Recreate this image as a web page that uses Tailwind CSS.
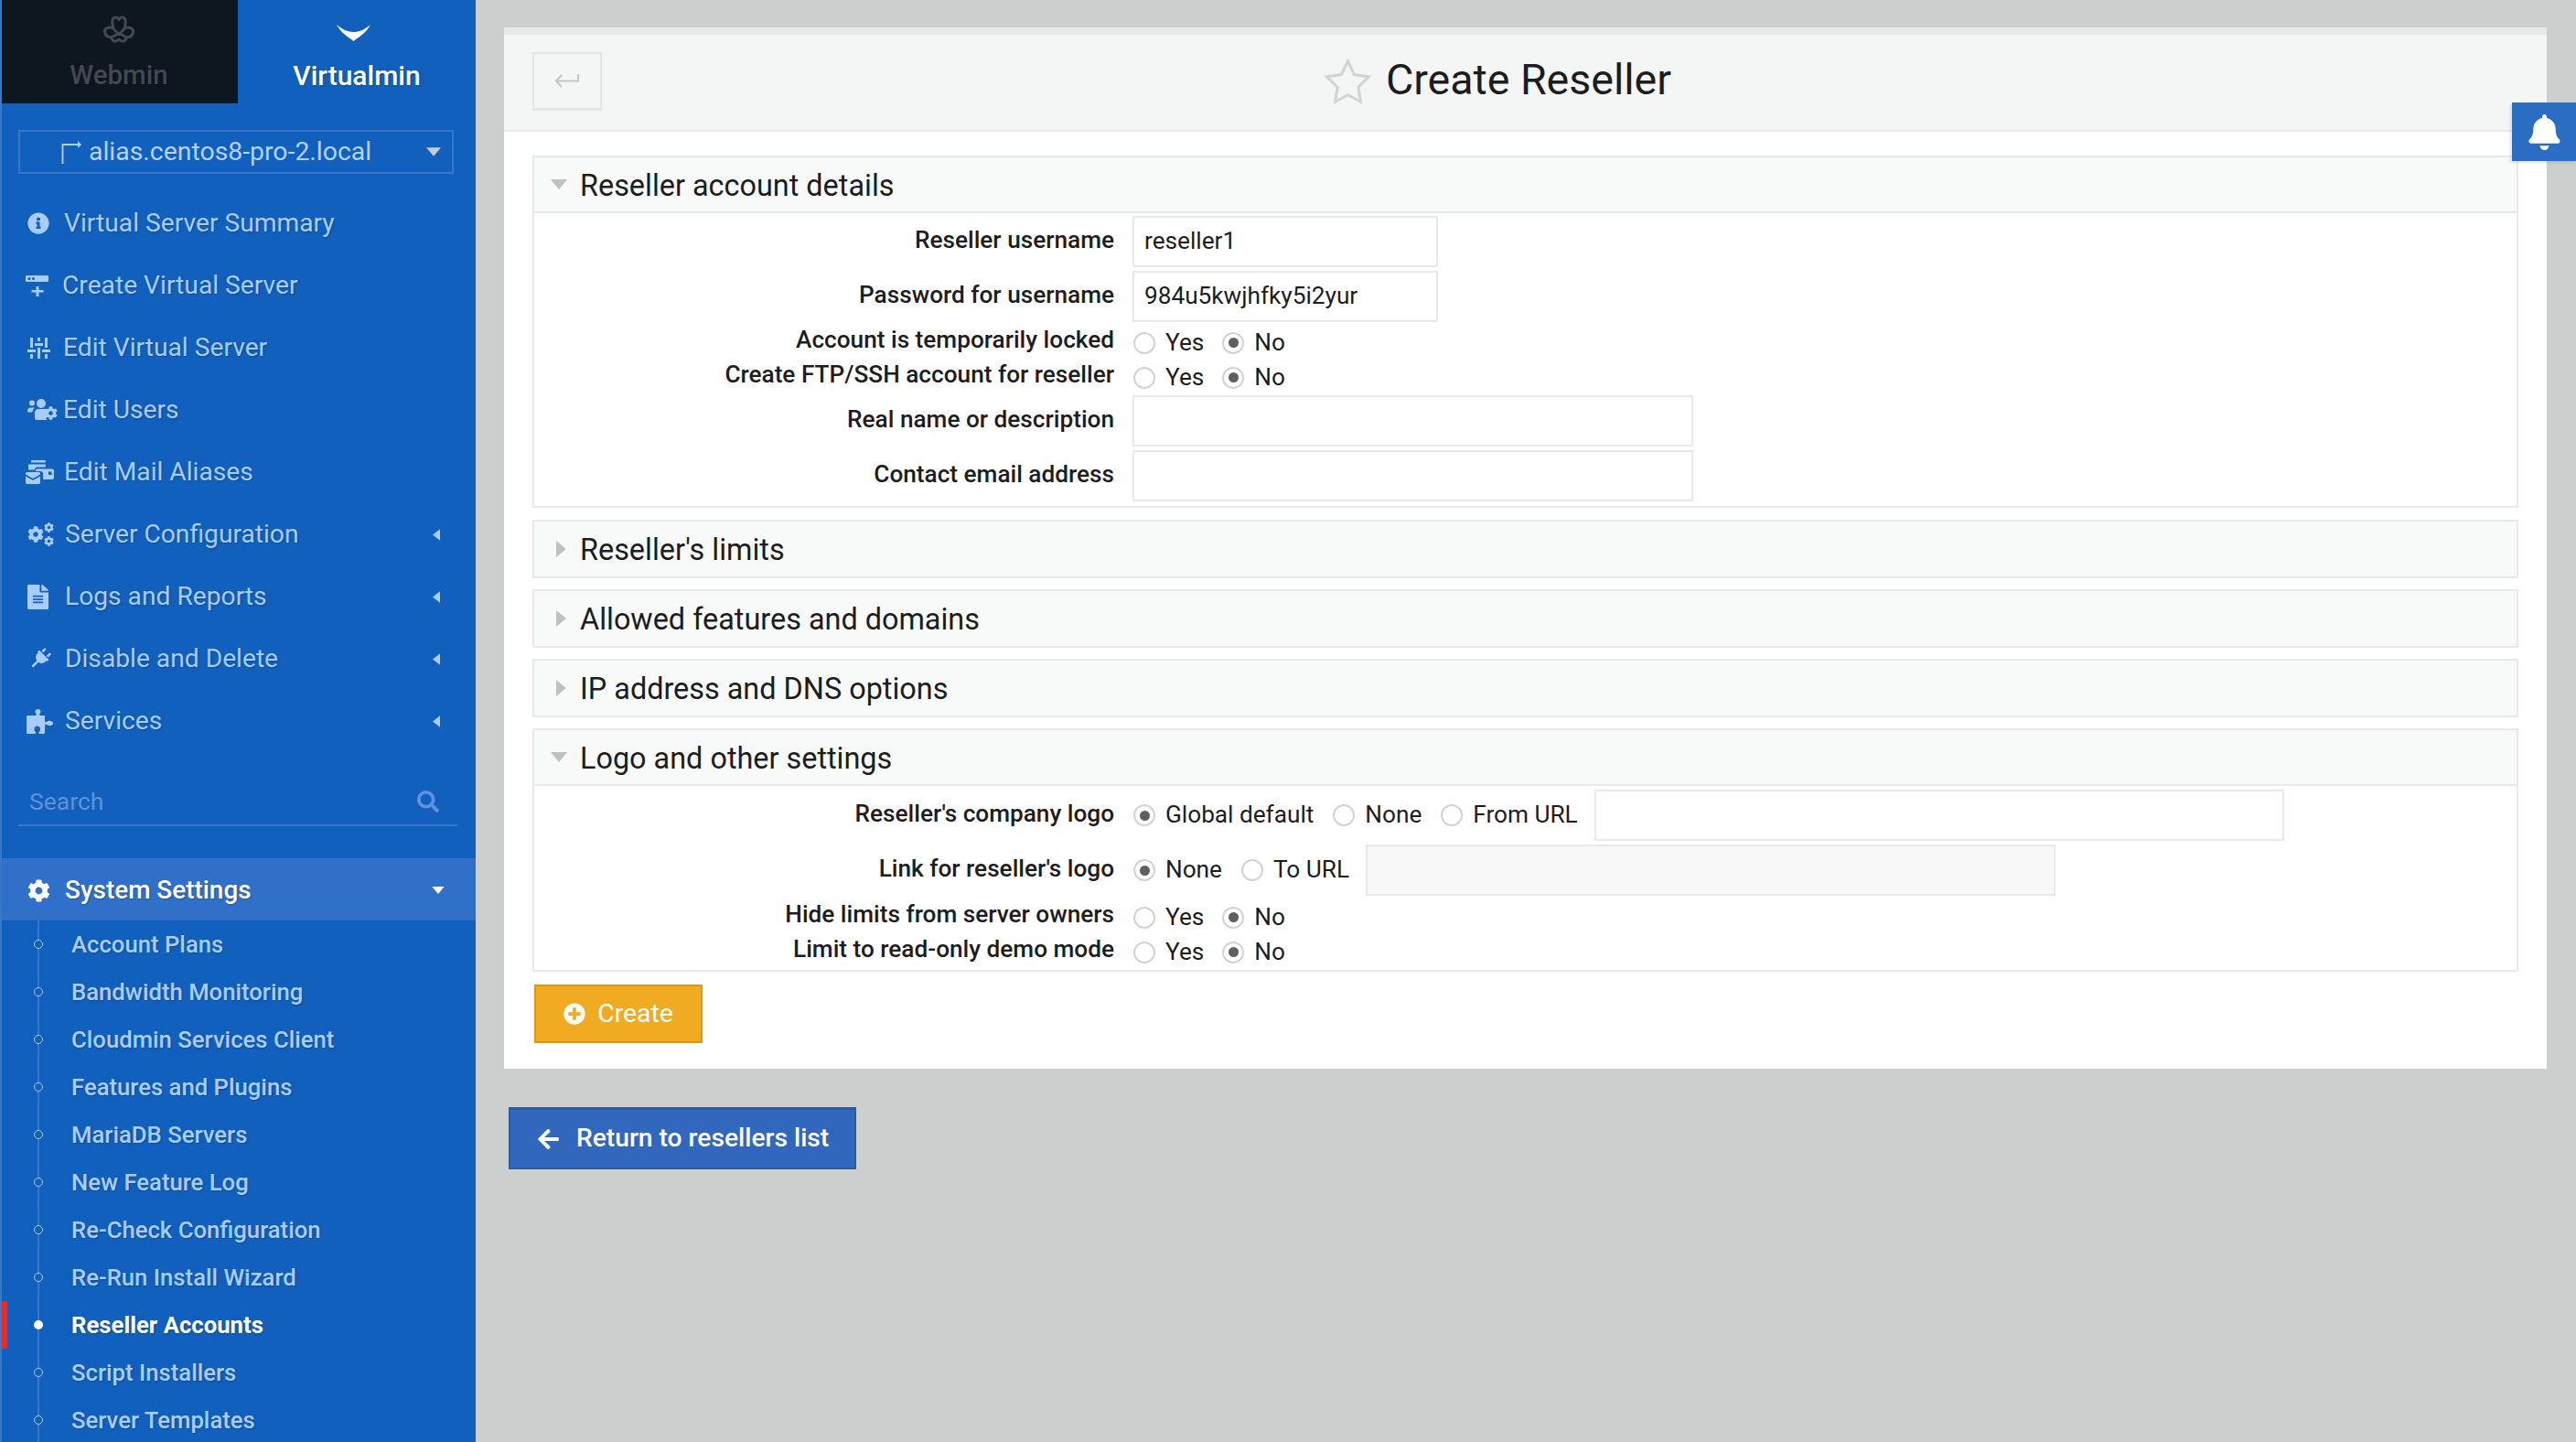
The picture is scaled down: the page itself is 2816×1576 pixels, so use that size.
<!DOCTYPE html>
<html lang="en">
<head>
    <meta charset="UTF-8">
    <title>Create Reseller</title>
    <script src="https://cdn.jsdelivr.net/npm/@tailwindcss/browser@4"></script>
</head>
<body class="bg-[#cdcfce] font-['Roboto',sans-serif] overflow-hidden">
    <svg class="hidden">
        <symbol id="cog" viewBox="0 0 512 512"><path d="M487.4 315.7l-42.6-24.6c4.3-23.2 4.3-47 0-70.2l42.6-24.6c4.9-2.8 7.1-8.6 5.5-14-11.1-35.6-30-67.8-54.7-94.6-3.8-4.1-10-5.1-14.8-2.3L380.8 110c-17.9-15.4-38.5-27.3-60.8-35.1V25.8c0-5.6-3.9-10.5-9.4-11.7-36.7-8.2-74.3-7.8-109.2 0-5.5 1.2-9.4 6.1-9.4 11.7V75c-22.2 7.9-42.8 19.8-60.8 35.1L88.7 85.5c-4.9-2.8-11-1.9-14.8 2.3-24.7 26.7-43.6 58.9-54.7 94.6-1.7 5.4.6 11.2 5.5 14L67.3 221c-4.3 23.2-4.3 47 0 70.2l-42.6 24.6c-4.9 2.8-7.1 8.6-5.5 14 11.1 35.6 30 67.8 54.7 94.6 3.8 4.1 10 5.1 14.8 2.3l42.6-24.6c17.9 15.4 38.5 27.3 60.8 35.1v49.2c0 5.6 3.9 10.5 9.4 11.7 36.7 8.2 74.3 7.8 109.2 0 5.5-1.2 9.4-6.1 9.4-11.7v-49.2c22.2-7.9 42.8-19.8 60.8-35.1l42.6 24.6c4.9 2.8 11 1.9 14.8-2.3 24.7-26.7 43.6-58.9 54.7-94.6 1.5-5.5-.7-11.3-5.6-14.1zM256 336c-44.1 0-80-35.9-80-80s35.9-80 80-80 80 35.9 80 80-35.9 80-80 80z"/></symbol>
        <symbol id="caret-left" viewBox="0 0 9 14"><path d="M9 0v14L0 7z"/></symbol>
        <symbol id="tri-down" viewBox="0 0 20 12"><path d="M0 0h20L10 12z"/></symbol>
        <symbol id="tri-right" viewBox="0 0 11 18"><path d="M0 0l11 9-11 9z"/></symbol>
    </svg>

    <div class="flex h-[1576px] w-[2816px] relative">
        <!-- Sidebar -->
        <aside class="w-[520px] h-full bg-[#1160bd] border-l-2 border-[#3a77c9] flex flex-col overflow-hidden shrink-0 [text-shadow:1px_1px_2px_rgba(0,0,0,0.22)]">
            <div class="flex h-[113px] shrink-0 -ml-[2px]">
                <div class="w-[260px] bg-[#0e1620] flex flex-col items-center pt-[17px] text-[#434852]">
                    <svg class="w-[34px] h-[32px]" viewBox="0 0 34 32" fill="none" stroke="#434852" stroke-width="3" stroke-linejoin="round">
                        <path d="M11 14C9 7 9 2 13.500 2C15.500 2 16.500 3 17 4.500C17.500 3 18.500 2 20.500 2C25 2 25 7 23 14C27 12 33 13 32.500 18C32 23 27 24 25 23.500C25 27 22 30.500 17 26C12 30.500 9 27 9 23.500C7 24 2 23 1.500 18C1 13 7 12 11 14Z"/>
                        <path d="M11 14C13 17 15 19 17 19.500C19 19 21 17 23 14M9 23.500C11 22.500 14 21 17 19.500C20 21 23 22.500 25 23.500"/>
                    </svg>
                    <span class="text-[29.500px] font-medium leading-none mt-[19px]">Webmin</span>
                </div>
                <div class="w-[260px] flex flex-col items-center pt-[27px] text-white">
                    <svg class="w-[37px] h-[18px] -ml-[8px]" viewBox="0 0 37 18" fill="#fff"><path d="M0 0C6 5 12 8 18.500 8C25 8 31 5 37 0C33 8 25 13 18.500 18C12 13 4 8 0 0Z"/></svg>
                    <span class="text-[30px] font-medium leading-none mt-[23px]">Virtualmin</span>
                </div>
            </div>

            <div class="mt-[29px] ml-[18px] w-[476px] h-[48px] shrink-0 border-2 border-[#3a77c9] flex items-center text-[#b5d2ff] text-[28.400px] pl-[45px] pr-[12px] [text-shadow:none]">
                <svg class="w-[23px] h-[26px] mr-[7px] shrink-0" viewBox="0 0 23 26" fill="none" stroke="#b5d2ff" stroke-width="1.800"><path d="M1.500 26V5H20"/><path d="M18 1l4 4-4 4" fill="#b5d2ff" stroke="none"/></svg>
                <span class="flex-1 whitespace-nowrap">alias.centos8-pro-2.local</span>
                <svg class="w-[16px] h-[10px]" fill="#c8ccd0"><use href="#tri-down"/></svg>
            </div>

            <nav class="mt-[20px] text-[28.200px] text-[#a9ccff] shrink-0">
                <a class="flex items-center h-[68px] pl-[28px]">
                    <span class="w-[40px] shrink-0"><svg class="w-[24px] h-[24px]" viewBox="0 0 512 512" fill="#a9ccff"><path d="M256 8C119.043 8 8 119.083 8 256c0 136.997 111.043 248 248 248s248-111.003 248-248C504 119.083 392.957 8 256 8zm0 110c23.196 0 42 18.804 42 42s-18.804 42-42 42-42-18.804-42-42 18.804-42 42-42zm56 254c0 6.627-5.373 12-12 12h-88c-6.627 0-12-5.373-12-12v-24c0-6.627 5.373-12 12-12h12v-64h-12c-6.627 0-12-5.373-12-12v-24c0-6.627 5.373-12 12-12h64c6.627 0 12 5.373 12 12v100h12c6.627 0 12 5.373 12 12v24z"/></svg></span>
                    <span>Virtual Server Summary</span>
                </a>
                <a class="flex items-center h-[68px] pl-[26px]">
                    <span class="w-[40px] shrink-0"><svg class="w-[26px] h-[24px]" viewBox="0 0 26 24" fill="#a9ccff"><path d="M1 1h23a1 1 0 0 1 1 1v5a1 1 0 0 1-1 1H1a1 1 0 0 1-1-1V2a1 1 0 0 1 1-1z"/><path d="M11.500 13h3v4h5v2.500h-5V24h-3v-4.500h-5V17h5z"/><circle cx="4" cy="4.500" r="1.500" fill="#1160bd"/><circle cx="8.500" cy="4.500" r="1.500" fill="#1160bd"/></svg></span>
                    <span>Create Virtual Server</span>
                </a>
                <a class="flex items-center h-[68px] pl-[28px]">
                    <span class="w-[39px] shrink-0"><svg class="w-[25px] h-[23px]" viewBox="0 0 25 23" fill="#a9ccff"><rect x="3" y="0" width="3" height="11"/><rect x="0" y="13" width="9" height="3"/><rect x="3" y="18" width="3" height="5"/><rect x="11" y="0" width="3" height="4"/><rect x="8" y="6" width="9" height="3"/><rect x="11" y="11" width="3" height="12"/><rect x="19" y="0" width="3" height="11"/><rect x="16" y="13" width="9" height="3"/><rect x="19" y="18" width="3" height="5"/></svg></span>
                    <span>Edit Virtual Server</span>
                </a>
                <a class="flex items-center h-[68px] pl-[28px]">
                    <span class="w-[39px] shrink-0"><svg class="w-[33px] h-[24px]" viewBox="0 0 33 24" fill="#a9ccff"><circle cx="5" cy="4.500" r="3"/><circle cx="15" cy="5" r="5"/><path d="M0 13c0-2 1.500-3.500 4-3.500h4c-1.500 1.500-2.500 3-2.500 5H1a1 1 0 0 1-1-1.500z"/><path d="M8 15c0-2.500 2-4 4-4h6c2 0 3 .5 3.500 2-1.500 2-1.500 7-.5 9.500V23H10a2 2 0 0 1-2-2z"/><use href="#cog" x="18" y="8" width="15" height="15"/></svg></span>
                    <span>Edit Users</span>
                </a>
                <a class="flex items-center h-[68px] pl-[26px]">
                    <span class="w-[42px] shrink-0"><svg class="w-[31px] h-[26px]" viewBox="0 0 31 26" fill="#a9ccff"><rect x="6" y="0" width="16" height="2.500" rx="1"/><path d="M3 4.500h19v3h-9a3 3 0 0 0-3 3h-7z"/><path d="M12 9.500h17a2 2 0 0 1 2 2V19a2 2 0 0 1-2 2H19v-6a3 3 0 0 0-3-3h-5a2 2 0 0 1 1-2.500z"/><rect x="25" y="12.500" width="3.500" height="3.500" fill="#1160bd"/><path d="M0 14.500a1.500 1.500 0 0 1 1.500-1.500h13a1.500 1.500 0 0 1 1.500 1.500v1L8 20 0 15.500z"/><path d="M0 17.500l8 4.500 8-4.500v7a1.500 1.500 0 0 1-1.500 1.500h-13A1.500 1.500 0 0 1 0 24.500z"/></svg></span>
                    <span>Edit Mail Aliases</span>
                </a>
                <a class="flex items-center h-[68px] pl-[28px] pr-[39px]">
                    <span class="w-[41px] shrink-0"><svg class="w-[30px] h-[27px]" viewBox="0 0 30 27" fill="#a9ccff"><use href="#cog" x="0" y="4" width="18" height="18"/><use href="#cog" x="18" y="0" width="11" height="11"/><use href="#cog" x="18" y="15" width="11" height="11"/></svg></span>
                    <span class="flex-1">Server Configuration</span>
                    <svg class="w-[8px] h-[13px]" fill="#a9ccff"><use href="#caret-left"/></svg>
                </a>
                <a class="flex items-center h-[68px] pl-[28px] pr-[39px]">
                    <span class="w-[41px] shrink-0"><svg class="w-[23px] h-[27px]" viewBox="0 0 384 512" preserveAspectRatio="none" fill="#a9ccff"><path d="M224 136V0H24C10.7 0 0 10.7 0 24v464c0 13.300 10.700 24 24 24h336c13.300 0 24-10.700 24-24V160H248c-13.200 0-24-10.800-24-24zm64 236c0 6.600-5.400 12-12 12H108c-6.600 0-12-5.400-12-12v-8c0-6.600 5.400-12 12-12h168c6.600 0 12 5.400 12 12v8zm0-64c0 6.600-5.400 12-12 12H108c-6.600 0-12-5.400-12-12v-8c0-6.600 5.400-12 12-12h168c6.600 0 12 5.400 12 12v8zm0-72v8c0 6.600-5.400 12-12 12H108c-6.600 0-12-5.400-12-12v-8c0-6.600 5.400-12 12-12h168c6.600 0 12 5.400 12 12zm96-114.100v6.100H256V0h6.100c6.400 0 12.500 2.500 17 7l97.900 98c4.500 4.500 7 10.600 7 16.900z"/></svg></span>
                    <span class="flex-1">Logs and Reports</span>
                    <svg class="w-[8px] h-[13px]" fill="#a9ccff"><use href="#caret-left"/></svg>
                </a>
                <a class="flex items-center h-[68px] pl-[28px] pr-[39px]">
                    <span class="w-[41px] shrink-0"><svg class="w-[28px] h-[28px]" viewBox="0 0 640 640" fill="#a9ccff"><path transform="rotate(45 320 320) translate(147 41) scale(0.9)" d="M320 32a32 32 0 0 0-64 0v96h64zm48 128H16a16 16 0 0 0-16 16v32a16 16 0 0 0 16 16h16v32a160.070 160.070 0 0 0 128 156.800V620h64V412.800A160.070 160.070 0 0 0 352 256v-32h16a16 16 0 0 0 16-16v-32a16 16 0 0 0-16-16zM128 32a32 32 0 0 0-64 0v96h64z"/></svg></span>
                    <span class="flex-1">Disable and Delete</span>
                    <svg class="w-[8px] h-[13px]" fill="#a9ccff"><use href="#caret-left"/></svg>
                </a>
                <a class="flex items-center h-[68px] pl-[27px] pr-[39px]">
                    <span class="w-[42px] shrink-0"><svg class="w-[29px] h-[27px]" viewBox="0 0 29 27" fill="#a9ccff"><path d="M1 7h8.500C11 7 11 5.500 10.500 5 9.500 4 9.500 3 9.500 2.500 9.500 1 11 0 12.500 0S15.500 1 15.500 2.500c0 .5 0 1.500-1 2.500-.5.500-.5 2 1 2H20v6c0 1.500 1.500 1.500 2 1 .8-.8 2-1.200 3-1.200 2 0 4 1 4 2.700s-2 2.700-4 2.700c-1 0-2.200-.4-3-1.200-.5-.5-2-.5-2 1V26a1 1 0 0 1-1 1h-4.500c-1.500 0-1.500-1.500-.5-2.500.8-.8 1-1.500 1-2.500 0-2-1.500-3.500-3.500-3.500S8.500 20 8.500 22c0 1 .2 1.700 1 2.500 1 1 1 2.500-.5 2.500H1a1 1 0 0 1-1-1V8a1 1 0 0 1 1-1z"/></svg></span>
                    <span class="flex-1">Services</span>
                    <svg class="w-[8px] h-[13px]" fill="#a9ccff"><use href="#caret-left"/></svg>
                </a>
            </nav>

            <div class="mx-[18px] w-[480px] h-[81px] shrink-0 border-b-2 border-[#3a77c9] flex items-center justify-between pl-[12px] pr-[20px] pt-[28px] text-[#5f92dc] text-[26.500px] [text-shadow:none]">
                <span>Search</span>
                <svg class="w-[24px] h-[24px]" viewBox="0 0 512 512" fill="#5f92dc"><path d="M505 442.700L405.300 343c-4.500-4.500-10.600-7-17-7H372c27.600-35.300 44-79.700 44-128C416 93.100 322.900 0 208 0S0 93.100 0 208s93.100 208 208 208c48.300 0 92.700-16.400 128-44v16.300c0 6.400 2.500 12.500 7 17l99.700 99.700c9.400 9.400 24.600 9.400 33.900 0l28.300-28.300c9.400-9.400 9.400-24.600.1-34zM208 336c-70.700 0-128-57.200-128-128 0-70.700 57.200-128 128-128 70.700 0 128 57.200 128 128 0 70.700-57.200 128-128 128z"/></svg>
            </div>

            <a class="mt-[35px] h-[68px] shrink-0 bg-[#3070c8] flex items-center pl-[28px] pr-[34px] pt-[2px] text-white text-[27.900px] font-medium">
                <svg class="w-[25px] h-[25px] mr-[16px]" fill="#fff"><use href="#cog"/></svg>
                <span class="flex-1">System Settings</span>
                <svg class="w-[14px] h-[8px]" fill="#fff"><use href="#tri-down"/></svg>
            </a>

            <ul class="ml-[39px] flex-1 border-l-2 border-[#3c78c8] text-[25.700px] text-[#a9ccff] font-medium">
                <li class="flex items-center h-[52px]"><span class="w-[10px] h-[10px] -ml-[6px] mr-[31px] rounded-full border-[1.500px] border-[#a9ccff] bg-[#1160bd]"></span>Account Plans</li>
                <li class="flex items-center h-[52px]"><span class="w-[10px] h-[10px] -ml-[6px] mr-[31px] rounded-full border-[1.500px] border-[#a9ccff] bg-[#1160bd]"></span>Bandwidth Monitoring</li>
                <li class="flex items-center h-[52px]"><span class="w-[10px] h-[10px] -ml-[6px] mr-[31px] rounded-full border-[1.500px] border-[#a9ccff] bg-[#1160bd]"></span>Cloudmin Services Client</li>
                <li class="flex items-center h-[52px]"><span class="w-[10px] h-[10px] -ml-[6px] mr-[31px] rounded-full border-[1.500px] border-[#a9ccff] bg-[#1160bd]"></span>Features and Plugins</li>
                <li class="flex items-center h-[52px]"><span class="w-[10px] h-[10px] -ml-[6px] mr-[31px] rounded-full border-[1.500px] border-[#a9ccff] bg-[#1160bd]"></span>MariaDB Servers</li>
                <li class="flex items-center h-[52px]"><span class="w-[10px] h-[10px] -ml-[6px] mr-[31px] rounded-full border-[1.500px] border-[#a9ccff] bg-[#1160bd]"></span>New Feature Log</li>
                <li class="flex items-center h-[52px]"><span class="w-[10px] h-[10px] -ml-[6px] mr-[31px] rounded-full border-[1.500px] border-[#a9ccff] bg-[#1160bd]"></span>Re-Check Configuration</li>
                <li class="flex items-center h-[52px]"><span class="w-[10px] h-[10px] -ml-[6px] mr-[31px] rounded-full border-[1.500px] border-[#a9ccff] bg-[#1160bd]"></span>Re-Run Install Wizard</li>
                <li class="relative flex items-center h-[52px] text-white font-bold">
                    <span class="absolute -left-[43px] top-0 w-[8px] h-[52px] bg-[#f5261c]"></span>
                    <span class="w-[10px] h-[10px] -ml-[6px] mr-[31px] rounded-full bg-white"></span>Reseller Accounts
                </li>
                <li class="flex items-center h-[52px]"><span class="w-[10px] h-[10px] -ml-[6px] mr-[31px] rounded-full border-[1.500px] border-[#a9ccff] bg-[#1160bd]"></span>Script Installers</li>
                <li class="flex items-center h-[52px]"><span class="w-[10px] h-[10px] -ml-[6px] mr-[31px] rounded-full border-[1.500px] border-[#a9ccff] bg-[#1160bd]"></span>Server Templates</li>
            </ul>
        </aside>

        <!-- Main -->
        <main class="flex-1 pl-[31px] pr-[32px] pt-[30px] text-[#1d1d1d]">
            <div class="bg-white border-t-[8px] border-[#e8e9e9] h-[1138px]">
                <header class="h-[106px] bg-[#f4f6f5] border-b-2 border-[#e8e9e9] flex items-center pl-[31px]">
                    <button class="w-[76px] h-[64px] mt-[-2px] border-2 border-[#e4e5e5] border-b-[3px] flex items-center justify-center">
                        <svg class="w-[28px] h-[18px]" viewBox="0 0 28 18" fill="none" stroke="#c4c6c6" stroke-width="2"><path d="M26 1v7.500H2"/><path d="M8 2L2 8.500 8 15"/></svg>
                    </button>
                    <div class="flex-1 flex items-center justify-center pr-[168px] pb-[5px]">
                        <svg class="w-[53px] h-[50px] mr-[15px]" viewBox="0 0 53 50" fill="none" stroke="#d2d3d3" stroke-width="3"><path d="M26.500 4l6.900 14.600 15.800 2.300-11.400 11.300 2.700 16-14-7.600-14 7.600 2.700-16L3.300 20.900l15.800-2.300z"/></svg>
                        <h1 class="text-[46.500px] leading-none">Create Reseller</h1>
                    </div>
                </header>

                <div class="pl-[31px] pr-[31px] pt-[26px]">
                    <!-- Reseller account details -->
                    <section class="border-2 border-[#e8e9e9] w-[2171px]">
                        <div class="h-[61px] bg-[#f8f9f9] border-b-2 border-[#e8e9e9] flex items-center pl-[17px] text-[32.400px]">
                            <svg class="w-[20px] h-[11px] mr-[13px]" fill="#c0c2c2"><use href="#tri-down"/></svg>
                            <span class="pt-[3px]">Reseller account details</span>
                        </div>
                        <div class="pt-[1px] pb-[3px] text-[26.200px]">
                            <div class="flex items-center h-[60px]">
                                <label class="w-[634px] text-right font-medium mb-[3px]">Reseller username</label>
                                <span class="ml-[20px] w-[334px] h-[56px] border-2 border-[#e8e9e9] flex items-center pl-[11px]">reseller1</span>
                            </div>
                            <div class="flex items-center h-[60px]">
                                <label class="w-[634px] text-right font-medium mb-[3px]">Password for username</label>
                                <span class="ml-[20px] w-[334px] h-[56px] border-2 border-[#e8e9e9] flex items-center pl-[11px]">984u5kwjhfky5i2yur</span>
                            </div>
                            <div class="flex items-center h-[38px]">
                                <label class="w-[634px] text-right font-medium mb-[2px]">Account is temporarily locked</label>
                                <div class="ml-[21px] mt-[3px] flex items-center">
                                    <span class="w-[24px] h-[24px] rounded-full border-2 border-[#d2d3d3]"></span><span class="ml-[11px] mr-[20px]">Yes</span>
                                    <span class="w-[24px] h-[24px] rounded-full border-2 border-[#d2d3d3] flex items-center justify-center"><span class="w-[11px] h-[11px] rounded-full bg-[#5f5f5f]"></span></span><span class="ml-[11px]">No</span>
                                </div>
                            </div>
                            <div class="flex items-center h-[38px]">
                                <label class="w-[634px] text-right font-medium mb-[2px]">Create FTP/SSH account for reseller</label>
                                <div class="ml-[21px] mt-[3px] flex items-center">
                                    <span class="w-[24px] h-[24px] rounded-full border-2 border-[#d2d3d3]"></span><span class="ml-[11px] mr-[20px]">Yes</span>
                                    <span class="w-[24px] h-[24px] rounded-full border-2 border-[#d2d3d3] flex items-center justify-center"><span class="w-[11px] h-[11px] rounded-full bg-[#5f5f5f]"></span></span><span class="ml-[11px]">No</span>
                                </div>
                            </div>
                            <div class="flex items-center h-[60px]">
                                <label class="w-[634px] text-right font-medium mb-[3px]">Real name or description</label>
                                <span class="ml-[20px] w-[613px] h-[56px] border-2 border-[#e8e9e9]"></span>
                            </div>
                            <div class="flex items-center h-[60px]">
                                <label class="w-[634px] text-right font-medium mb-[3px]">Contact email address</label>
                                <span class="ml-[20px] w-[613px] h-[56px] border-2 border-[#e8e9e9]"></span>
                            </div>
                        </div>
                    </section>

                    <!-- Collapsed sections -->
                    <section class="mt-[13px] w-[2171px] h-[64px] border-2 border-[#e8e9e9] bg-[#f8f9f9] flex items-center pl-[24px] text-[32.400px]">
                        <svg class="w-[11px] h-[18px] mr-[15px]" fill="#c0c2c2"><use href="#tri-right"/></svg>
                        <span class="pt-[3px]">Reseller's limits</span>
                    </section>
                    <section class="mt-[12px] w-[2171px] h-[64px] border-2 border-[#e8e9e9] bg-[#f8f9f9] flex items-center pl-[24px] text-[32.400px]">
                        <svg class="w-[11px] h-[18px] mr-[15px]" fill="#c0c2c2"><use href="#tri-right"/></svg>
                        <span class="pt-[3px]">Allowed features and domains</span>
                    </section>
                    <section class="mt-[12px] w-[2171px] h-[64px] border-2 border-[#e8e9e9] bg-[#f8f9f9] flex items-center pl-[24px] text-[32.400px]">
                        <svg class="w-[11px] h-[18px] mr-[15px]" fill="#c0c2c2"><use href="#tri-right"/></svg>
                        <span class="pt-[3px]">IP address and DNS options</span>
                    </section>

                    <!-- Logo and other settings -->
                    <section class="mt-[12px] border-2 border-[#e8e9e9] w-[2171px]">
                        <div class="h-[61px] bg-[#f8f9f9] border-b-2 border-[#e8e9e9] flex items-center pl-[17px] text-[32.400px]">
                            <svg class="w-[20px] h-[11px] mr-[13px]" fill="#c0c2c2"><use href="#tri-down"/></svg>
                            <span class="pt-[3px]">Logo and other settings</span>
                        </div>
                        <div class="pt-[2px] pb-[2px] text-[26.200px]">
                            <div class="flex items-center h-[60px]">
                                <label class="w-[634px] text-right font-medium mb-[3px]">Reseller's company logo</label>
                                <div class="ml-[21px] flex items-center">
                                    <span class="w-[24px] h-[24px] rounded-full border-2 border-[#d2d3d3] flex items-center justify-center"><span class="w-[11px] h-[11px] rounded-full bg-[#5f5f5f]"></span></span><span class="ml-[11px] mr-[21px]">Global default</span>
                                    <span class="w-[24px] h-[24px] rounded-full border-2 border-[#d2d3d3]"></span><span class="ml-[11px] mr-[21px]">None</span>
                                    <span class="w-[24px] h-[24px] rounded-full border-2 border-[#d2d3d3]"></span><span class="ml-[11px] mr-[18px]">From URL</span>
                                    <span class="w-[754px] h-[56px] border-2 border-[#e8e9e9]"></span>
                                </div>
                            </div>
                            <div class="flex items-center h-[60px]">
                                <label class="w-[634px] text-right font-medium mb-[3px]">Link for reseller's logo</label>
                                <div class="ml-[21px] flex items-center">
                                    <span class="w-[24px] h-[24px] rounded-full border-2 border-[#d2d3d3] flex items-center justify-center"><span class="w-[11px] h-[11px] rounded-full bg-[#5f5f5f]"></span></span><span class="ml-[11px] mr-[21px]">None</span>
                                    <span class="w-[24px] h-[24px] rounded-full border-2 border-[#d2d3d3]"></span><span class="ml-[11px] mr-[18px]">To URL</span>
                                    <span class="w-[754px] h-[56px] border-2 border-[#e8e9e9] bg-[#f8f8f8]"></span>
                                </div>
                            </div>
                            <div class="flex items-center h-[38px] mt-[1px]">
                                <label class="w-[634px] text-right font-medium mb-[2px]">Hide limits from server owners</label>
                                <div class="ml-[21px] mt-[3px] flex items-center">
                                    <span class="w-[24px] h-[24px] rounded-full border-2 border-[#d2d3d3]"></span><span class="ml-[11px] mr-[20px]">Yes</span>
                                    <span class="w-[24px] h-[24px] rounded-full border-2 border-[#d2d3d3] flex items-center justify-center"><span class="w-[11px] h-[11px] rounded-full bg-[#5f5f5f]"></span></span><span class="ml-[11px]">No</span>
                                </div>
                            </div>
                            <div class="flex items-center h-[38px]">
                                <label class="w-[634px] text-right font-medium mb-[2px]">Limit to read-only demo mode</label>
                                <div class="ml-[21px] mt-[3px] flex items-center">
                                    <span class="w-[24px] h-[24px] rounded-full border-2 border-[#d2d3d3]"></span><span class="ml-[11px] mr-[20px]">Yes</span>
                                    <span class="w-[24px] h-[24px] rounded-full border-2 border-[#d2d3d3] flex items-center justify-center"><span class="w-[11px] h-[11px] rounded-full bg-[#5f5f5f]"></span></span><span class="ml-[11px]">No</span>
                                </div>
                            </div>
                        </div>
                    </section>

                    <button class="mt-[14px] ml-[2px] w-[184px] h-[64px] bg-[#f0ab22] border-2 border-[#dc9710] flex items-center justify-center text-white text-[28.400px]">
                        <svg class="w-[24px] h-[24px] mr-[13px]" viewBox="0 0 512 512" fill="#fff"><path d="M256 8C119 8 8 119 8 256s111 248 248 248 248-111 248-248S393 8 256 8zm144 276c0 6.600-5.400 12-12 12h-92v92c0 6.600-5.400 12-12 12h-56c-6.600 0-12-5.400-12-12v-92h-92c-6.600 0-12-5.400-12-12v-56c0-6.600 5.400-12 12-12h92v-92c0-6.600 5.400-12 12-12h56c6.600 0 12 5.400 12 12v92h92c6.600 0 12 5.400 12 12v56z"/></svg>
                        Create
                    </button>
                </div>
            </div>

            <button class="mt-[42px] ml-[5px] w-[380px] h-[68px] bg-[#3168bd] border-2 border-t-[3px] border-[#2a5c9e] flex items-center pl-[29px] text-white text-[28.200px] font-medium">
                <svg class="w-[25px] h-[26px] mr-[18px]" viewBox="0 0 448 512" fill="#fff"><path d="M257.500 445.100l-22.200 22.200c-9.400 9.400-24.600 9.400-33.900 0L7 273c-9.400-9.400-9.400-24.600 0-33.900L201.400 44.700c9.400-9.400 24.600-9.400 33.900 0l22.200 22.200c9.500 9.500 9.300 25-.4 34.300L136.600 216H424c13.300 0 24 10.700 24 24v32c0 13.300-10.700 24-24 24H136.600l120.500 114.800c9.800 9.300 10 24.800.4 34.300z"/></svg>
                Return to resellers list
            </button>
        </main>

        <!-- Notification tab -->
        <div class="absolute right-0 top-[112px] w-[70px] h-[64px] bg-[#2c6dc4] flex items-center justify-center shadow-[-2px_2px_3px_rgba(0,0,0,0.1)]">
            <svg class="w-[35px] h-[39px]" viewBox="0 0 448 512" fill="#fff"><path d="M224 512c35.320 0 63.970-28.650 63.970-64H160.030c0 35.350 28.650 64 63.970 64zm215.390-149.710c-19.320-20.760-55.470-51.990-55.470-154.290 0-77.700-54.480-139.900-127.940-155.160V32c0-17.670-14.320-32-31.980-32s-31.980 14.330-31.980 32v20.840C118.560 68.100 64.080 130.300 64.080 208c0 102.300-36.150 133.530-55.470 154.290-6 6.450-8.660 14.160-8.610 21.710.11 16.400 12.980 32 32.100 32h383.800c19.120 0 32-15.600 32.100-32 .05-7.550-2.610-15.270-8.610-21.710z"/></svg>
        </div>
    </div>
</body>
</html>
